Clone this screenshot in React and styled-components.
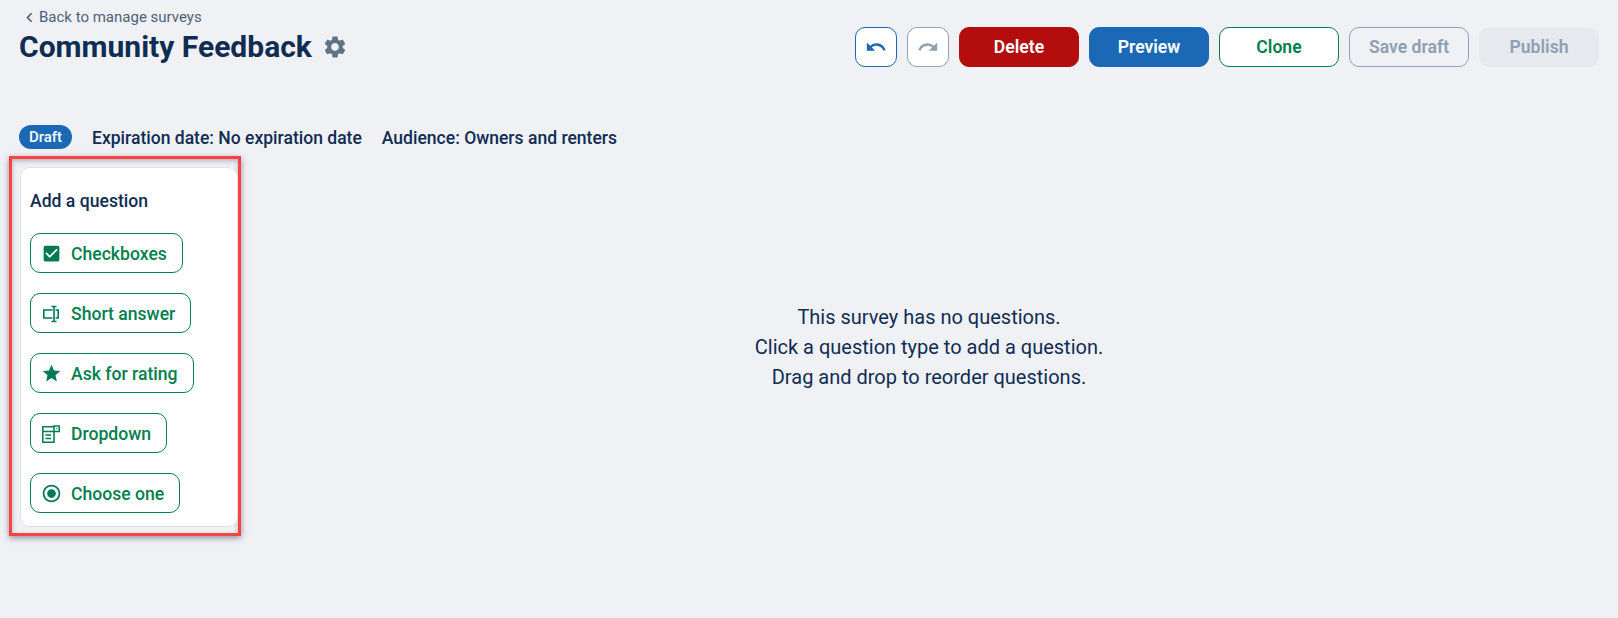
import React from 'react';
import styled, { createGlobalStyle } from 'styled-components';
import { MdCheckBox, MdChevronLeft, MdRadioButtonChecked, MdRedo, MdSettings, MdStar, MdUndo } from 'react-icons/md';

const GlobalStyle = createGlobalStyle`
  html, body {
    margin: 0;
    padding: 0;
    background: #eff1f5;
    font-family: Roboto, "Liberation Sans", sans-serif;
    color: #0f2c52;
  }
`;

const Page = styled.div`
  height: 618px;
  box-sizing: border-box;
  padding: 8px 19px 0 19px;
  overflow: hidden;
`;

const Header = styled.header`
  display: flex;
  justify-content: space-between;
  align-items: flex-start;
  height: 117px;
`;

const TitleBlock = styled.div`
  display: flex;
  flex-direction: column;
`;

const BackLink = styled.a`
  display: flex;
  align-items: center;
  margin-left: 1px;
  height: 18px;
  font-size: 15px;
  color: #4e6079;
  svg {
    font-size: 19px;
  }
`;

const TitleRow = styled.div`
  display: flex;
  align-items: center;
  gap: 10px;
  margin-top: 2px;
`;

const Title = styled.h1`
  margin: 0;
  font-size: 30px;
  line-height: 38px;
  font-weight: 700;
  color: #0f2c52;
`;

const Gear = styled(MdSettings)`
  font-size: 26px;
  color: #5f7385;
`;

const Toolbar = styled.div`
  display: flex;
  gap: 10px;
  margin-top: 19px;
`;

const IconButton = styled.button`
  width: 42px;
  height: 40px;
  display: flex;
  align-items: center;
  justify-content: center;
  padding: 0;
  border-radius: 10px;
  background: #fff;
  border: 1px solid ${(p) => (p.$disabled ? '#8ea2b8' : '#1b69b5')};
  color: ${(p) => (p.$disabled ? '#8e9fb3' : '#1b69b5')};
  font-size: 22px;
`;

const variants = {
  danger: 'background:#b30d0d;color:#fff;border:1px solid #b30d0d;',
  primary: 'background:#1b69b5;color:#fff;border:1px solid #1b69b5;',
  outline: 'background:#fff;color:#00804d;border:1px solid #00804d;',
  ghost: 'background:transparent;color:#8e9fb3;border:1px solid #8ea2b8;',
  muted: 'background:#e6e9ed;color:#8e9fb3;border:1px solid #e6e9ed;',
};

const ActionButton = styled.button`
  width: 120px;
  height: 40px;
  border-radius: 10px;
  font-family: inherit;
  font-size: 17.6px;
  font-weight: 600;
  padding: 0;
  ${(p) => variants[p.$variant]}
`;

const MetaRow = styled.div`
  display: flex;
  align-items: center;
  height: 24px;
  font-size: 17.55px;
  font-weight: 500;
  color: #0f2c52;
`;

const StatusPill = styled.span`
  display: flex;
  align-items: center;
  justify-content: center;
  width: 53px;
  height: 24px;
  border-radius: 12px;
  background: #1b69b5;
  color: #fff;
  font-size: 15px;
  font-weight: 500;
  margin-right: 20px;
`;

const MetaItem = styled.span`
  margin-right: 20px;
  padding-top: 1px;
`;

const Body = styled.div`
  display: flex;
  margin-top: 7px;
`;

const Highlight = styled.div`
  margin-left: -10px;
  width: 232px;
  height: 380px;
  flex: none;
  box-sizing: border-box;
  border: 3px solid #fa4143;
  padding: 8px 0 0 8px;
  box-shadow: 0 2px 6px rgba(60, 64, 80, 0.55), inset 0 2px 5px rgba(60, 64, 80, 0.35);
`;

const Card = styled.aside`
  width: 218px;
  height: 360px;
  box-sizing: border-box;
  background: #fff;
  border: 1px solid #dfe2e7;
  border-radius: 10px;
  padding: 21px 9px 0;
  display: flex;
  flex-direction: column;
  align-items: flex-start;
  gap: 20px;
`;

const CardTitle = styled.div`
  font-size: 17.6px;
  font-weight: 500;
  line-height: 24px;
  color: #0f2c52;
`;

const QuestionButton = styled.button`
  height: 40px;
  box-sizing: border-box;
  display: flex;
  align-items: center;
  gap: 11px;
  padding: 1px 15px 0 11px;
  background: #fff;
  border: 1px solid #00804d;
  border-radius: 10px;
  color: #00804d;
  font-family: inherit;
  font-size: 17.6px;
  font-weight: 500;
`;

const IconBox = styled.span`
  width: 18px;
  height: 20px;
  display: flex;
  align-items: center;
  justify-content: center;
  font-size: 21px;
  color: #007a55;
  svg {
    flex: none;
  }
`;

const Empty = styled.div`
  flex: 1;
  text-align: center;
  font-size: 20px;
  line-height: 30px;
  color: #0f2c52;
  padding: 146px 0 0 18px;
`;

const ShortAnswerIcon = () => (
  <svg width="18" height="18" viewBox="0 0 18 18" fill="none" stroke="currentColor" strokeWidth="1.6">
    <path d="M10.500 5H1.800v8h8.700" />
    <path d="M12 1.500v15M9.500 1.500h5M9.500 16.500h5" />
    <path d="M13.500 5h2.700v8h-2.700" />
  </svg>
);

const DropdownIcon = () => (
  <svg width="18" height="18" viewBox="0 0 18 18" fill="none" stroke="currentColor" strokeWidth="1.5">
    <path d="M12 6.500v10.700H.8V1.800H12" />
    <path d="M12 1h5.200v5.500H12z" />
    <path d="M.8 6.500H12" />
    <path d="M3.500 10h5.500M3.500 13.500h5.500" />
    <path d="M14 3.500h1.200" strokeWidth="1" />
  </svg>
);

const questionTypes = [
  { label: 'Checkboxes', icon: <MdCheckBox /> },
  { label: 'Short answer', icon: <ShortAnswerIcon /> },
  { label: 'Ask for rating', icon: <MdStar /> },
  { label: 'Dropdown', icon: <DropdownIcon /> },
  { label: 'Choose one', icon: <MdRadioButtonChecked /> },
];

export default function App() {
  return (
    <Page>
      <GlobalStyle />
      <Header>
        <TitleBlock>
          <BackLink>
            <MdChevronLeft />
            Back to manage surveys
          </BackLink>
          <TitleRow>
            <Title>Community Feedback</Title>
            <Gear />
          </TitleRow>
        </TitleBlock>
        <Toolbar>
          <IconButton>
            <MdUndo />
          </IconButton>
          <IconButton $disabled>
            <MdRedo />
          </IconButton>
          <ActionButton $variant="danger">Delete</ActionButton>
          <ActionButton $variant="primary">Preview</ActionButton>
          <ActionButton $variant="outline">Clone</ActionButton>
          <ActionButton $variant="ghost">Save draft</ActionButton>
          <ActionButton $variant="muted">Publish</ActionButton>
        </Toolbar>
      </Header>
      <MetaRow>
        <StatusPill>Draft</StatusPill>
        <MetaItem>Expiration date: No expiration date</MetaItem>
        <MetaItem>Audience: Owners and renters</MetaItem>
      </MetaRow>
      <Body>
        <Highlight>
          <Card>
            <CardTitle>Add a question</CardTitle>
            {questionTypes.map((q) => (
              <QuestionButton key={q.label}>
                <IconBox>{q.icon}</IconBox>
                {q.label}
              </QuestionButton>
            ))}
          </Card>
        </Highlight>
        <Empty>
          <div>This survey has no questions.</div>
          <div>Click a question type to add a question.</div>
          <div>Drag and drop to reorder questions.</div>
        </Empty>
      </Body>
    </Page>
  );
}
